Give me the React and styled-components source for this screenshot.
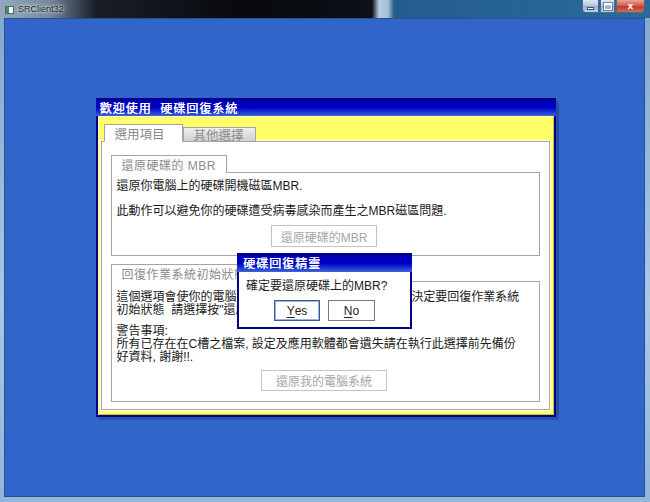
import React from 'react';
import styled, { createGlobalStyle } from 'styled-components';

const Global = createGlobalStyle`
	html, body {
		margin: 0;
		padding: 0;
		background: #6f9cc6;
	}
	* {
		box-sizing: border-box;
	}
`;

const cjk = `"Liberation Sans", "Noto Sans CJK TC", sans-serif`;

const Frame = styled.div`
	position: relative;
	width: 650px;
	height: 502px;
	display: flex;
	flex-direction: column;
	padding: 0 5px 5px 4px;
	background: linear-gradient(to bottom, #7fa8cf 0%, #a9c8e6 60%, #8fb6dc 100%);
	overflow: hidden;
`;

const TitleBar = styled.div`
	height: 18px;
	margin: 0 -5px 0 -4px;
	display: flex;
	align-items: flex-start;
	padding-left: 5px;
	background: linear-gradient(
		to right,
		#93a9c0 0,
		#76889c 50px,
		#1a1f27 95px,
		#07090d 240px,
		#0c1117 372px,
		#b4cbe2 379px,
		#a6bfd8 388px,
		#235d8d 394px,
		#2a6a9b 100%
	);
`;

const AppIcon = styled.div`
	width: 9px;
	height: 8px;
	margin-top: 6px;
	border: 1px solid #4f6a6a;
	background: linear-gradient(to right, #3f8f6f 0 3px, #f4f8f6 3px);
`;

const AppName = styled.span`
	margin: 4px 0 0 4px;
	font: 9px "Liberation Sans", sans-serif;
	color: #1b1b1b;
	text-shadow: 0 0 4px #e8eef4, 0 0 2px #e8eef4;
`;

const Caption = styled.div`
	margin-left: auto;
	margin-right: 5px;
	display: flex;
	gap: 1px;
`;

const CapButton = styled.div`
	width: ${p => p.w}px;
	height: 13px;
	display: flex;
	align-items: center;
	justify-content: center;
	border: 1px solid #4a6a88;
	border-top: none;
	border-radius: ${p => p.r};
	background: ${p =>
		p.close
			? 'linear-gradient(to bottom, #e8a494 0%, #d0604c 45%, #c0392b 55%, #d4705a 100%)'
			: 'linear-gradient(to bottom, #dce8f4 0%, #b6cce2 45%, #93b0cf 55%, #b8d0e8 100%)'};
	color: #fff;
	font: bold 9px "DejaVu Sans", sans-serif;
`;

const MinGlyph = styled.span`
	width: 7px;
	height: 3px;
	margin-top: 4px;
	background: #fff;
	border: 1px solid #3a5068;
`;

const MaxGlyph = styled.span`
	width: 8px;
	height: 7px;
	border: 1px solid #fff;
	border-top-width: 2px;
	outline: 1px solid rgba(58, 80, 104, 0.6);
`;

const Client = styled.div`
	flex: 1;
	display: flex;
	align-items: center;
	justify-content: center;
	background: #3265c9;
	border: 1px solid #2a4f8c;
	padding-left: 2px;
`;

const Dialog = styled.div`
	width: 460px;
	height: 319px;
	display: flex;
	flex-direction: column;
	background: #00008a;
	padding: 0 2px 2px 2px;
	box-shadow: 3px 3px 0 rgba(20, 40, 110, 0.35);
`;

const DlgTitle = styled.div`
	height: ${p => p.h}px;
	margin: 0 -2px;
	display: flex;
	align-items: center;
	padding-left: ${p => p.pl}px;
	background: linear-gradient(to bottom, #00007e 0%, #0000b4 18%, #0000c8 55%, #1c3ad2 80%, #4262dc 100%);
	color: #fff;
	font: 12px ${cjk};
	letter-spacing: 1px;
	border-radius: 2px 2px 0 0;
	text-shadow: 0.4px 0 0 #fff;
`;

const Yellow = styled.div`
	flex: 1;
	display: flex;
	flex-direction: column;
	background: #ffff6a;
	padding: 8px 4px 5px 3px;
	box-shadow: inset 0 1px 0 #ffffc0, inset 1px 0 0 #ffffb0, inset -1px -1px 0 #c8c440;
`;

const Tabs = styled.div`
	display: flex;
	align-items: flex-end;
	padding-left: 3px;
	margin-bottom: -1px;
	position: relative;
	z-index: 1;
`;

const Tab = styled.div`
	height: ${p => (p.active ? 18 : 15)}px;
	width: ${p => p.w}px;
	display: flex;
	align-items: center;
	padding-left: 10px;
	border: 1px solid #a4a4a4;
	border-bottom: ${p => (p.active ? '1px solid #fff' : '1px solid #a4a4a4')};
	background: ${p => (p.active ? '#fff' : 'linear-gradient(to bottom, #f0f0f0, #cfcfcf)')};
	color: #8a8a8a;
	font: 12.5px ${cjk};
`;

const Panel = styled.div`
	flex: 1;
	display: flex;
	flex-direction: column;
	gap: 8px;
	background: #fff;
	border: 1px solid #a4a4a4;
	box-shadow: 0 0 0 1px #fffff0;
	padding: 13px 9px 7px 9px;
`;

const Group = styled.div`
	display: flex;
	flex-direction: column;
`;

const Legend = styled.div`
	align-self: flex-start;
	height: 18px;
	display: flex;
	align-items: center;
	padding: 0 10px 0 10px;
	border: 1px solid #a4a4a4;
	border-bottom: none;
	background: #fff;
	color: #8c8c8c;
	font: 12px ${cjk};
	letter-spacing: 0.5px;
	margin-bottom: -1px;
	position: relative;
	z-index: 1;
	white-space: nowrap;
`;

const Box = styled.div`
	height: ${p => p.h}px;
	display: flex;
	flex-direction: column;
	border: 1px solid #a4a4a4;
	padding: ${p => p.pt}px 5px 0 5px;
	color: #1a1a1a;
	font: 12px ${cjk};
`;

const Para = styled.p`
	margin: 0 0 ${p => p.mb}px 0;
	line-height: ${p => p.lh}px;
	white-space: nowrap;
`;

const GrayButton = styled.div`
	align-self: center;
	width: ${p => p.w}px;
	height: ${p => p.h}px;
	display: flex;
	align-items: center;
	justify-content: center;
	border: 1px solid #c4c4c4;
	background: #fff;
	color: #a6a6a6;
	font: 12px ${cjk};
	margin-left: -2px;
`;

const Popup = styled.div`
	position: absolute;
	z-index: 10;
	left: 237px;
	top: 253px;
	width: 175px;
	height: 76px;
	display: flex;
	flex-direction: column;
	background: #00008a;
	padding: 0 2px 2px 2px;
`;

const PopBody = styled.div`
	flex: 1;
	display: flex;
	flex-direction: column;
	align-items: center;
	background: #fff;
	padding-top: 7px;
	font: 12px ${cjk};
	color: #1a1a1a;
`;

const PopText = styled.div`
	align-self: flex-start;
	padding-left: 7px;
	line-height: 14px;
`;

const PopButtons = styled.div`
	display: flex;
	gap: 8px;
	margin-top: 7px;
`;

const PopButton = styled.div`
	width: ${p => p.w}px;
	height: 21px;
	display: flex;
	align-items: center;
	justify-content: center;
	border: 1px solid ${p => (p.focus ? '#3c5a9a' : '#7a7a7a')};
	box-shadow: ${p => (p.focus ? 'inset 0 0 0 1px #9ab4e0' : 'none')};
	background: #fff;
	font: 12px "Liberation Sans", sans-serif;
	color: #222;
	u {
		text-decoration-thickness: 1px;
		text-underline-offset: 2px;
	}
`;

export default function App() {
	return (
		<>
			<Global />
			<Frame>
				<TitleBar>
					<AppIcon />
					<AppName>SRClient32</AppName>
					<Caption>
						<CapButton w={17} r="0 0 0 4px">
							<MinGlyph />
						</CapButton>
						<CapButton w={15} r="0">
							<MaxGlyph />
						</CapButton>
						<CapButton w={29} r="0 0 4px 0" close>
							x
						</CapButton>
					</Caption>
				</TitleBar>
				<Client>
					<Dialog>
						<DlgTitle h={20} pl={4}>歡迎使用&nbsp;&nbsp;硬碟回復系統</DlgTitle>
						<Yellow>
							<Tabs>
								<Tab active w={79}>選用項目</Tab>
								<Tab w={73}>其他選擇</Tab>
							</Tabs>
							<Panel>
								<Group>
									<Legend>還原硬碟的&nbsp;MBR</Legend>
									<Box h={84} pt={6}>
										<Para lh={14} mb={11}>還原你電腦上的硬碟開機磁區MBR.</Para>
										<Para lh={14} mb={7}>此動作可以避免你的硬碟遭受病毒感染而產生之MBR磁區問題.</Para>
										<GrayButton w={106} h={22}>還原硬碟的MBR</GrayButton>
									</Box>
								</Group>
								<Group>
									<Legend>回復作業系統初始狀態</Legend>
									<Box h={121} pt={9}>
										<Para lh={13} mb={8}>
											這個選項會使你的電腦還原到出廠時的預設狀態, 如果你決定要回復作業系統
											<br />
											初始狀態&nbsp;&nbsp;請選擇按"還原我的電腦系統"
										</Para>
										<Para lh={13} mb={6}>
											警告事項:
											<br />
											所有已存在在C槽之檔案, 設定及應用軟體都會遺失請在執行此選擇前先備份
											<br />
											好資料, 謝謝!!.
										</Para>
										<GrayButton w={126} h={21}>還原我的電腦系統</GrayButton>
									</Box>
								</Group>
							</Panel>
						</Yellow>
					</Dialog>
				</Client>
				<Popup>
					<DlgTitle h={19} pl={6}>硬碟回復精靈</DlgTitle>
					<PopBody>
						<PopText>確定要還原硬碟上的MBR?</PopText>
						<PopButtons>
							<PopButton w={46} focus>
								<u>Y</u>es
							</PopButton>
							<PopButton w={47}>
								<u>N</u>o
							</PopButton>
						</PopButtons>
					</PopBody>
				</Popup>
			</Frame>
		</>
	);
}
